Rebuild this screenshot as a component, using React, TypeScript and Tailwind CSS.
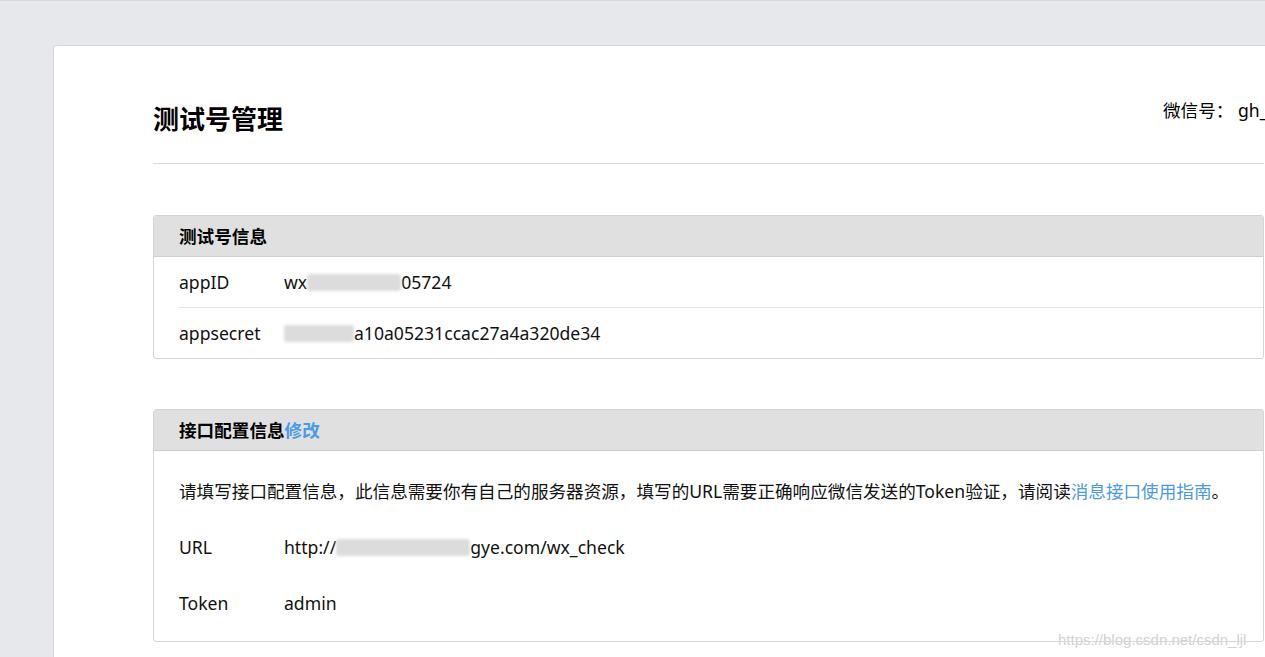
import React from "react";

const font = { fontFamily: '"Noto Sans", "Noto Sans CJK SC", sans-serif' };

function Blob({ w }: { w: number }) {
  return (
    <span
      className="inline-block h-[17px] align-[-2px] rounded-[3px] bg-[#dcdcdc] blur-[1.5px]"
      style={{ width: w }}
    />
  );
}

export default function App() {
  return (
    <div
      className="relative h-[657px] w-full overflow-hidden border-t border-[#d9d9dc] bg-[#e7e8eb] text-[#111]"
      style={font}
    >
      <div className="ml-[53px] mt-[44px] w-[1311px] rounded-[4px] border border-[#d6d6d6] bg-white pl-[99px] pr-[99px] pb-[40px]">
        {/* page header */}
        <div className="flex h-[118px] items-start justify-between border-b border-[#d9d9d9]">
          <h1 className="pt-[58px] text-[26px] font-bold leading-[30px] text-black">测试号管理</h1>
          <div className="w-[101px] whitespace-nowrap pt-[52px] text-[17.6px] leading-[24px] text-black">
            微信号： gh_5f3c8a1e2b47
          </div>
        </div>

        {/* section 1 */}
        <div className="mt-[51px] overflow-hidden rounded-[3px] border border-[#d4d4d4]">
          <div className="flex h-[41px] items-center border-b border-[#cfcfcf] bg-[#e0e0e0] pl-[25px] text-[17.6px] font-bold leading-[24px] text-black">
            测试号信息
          </div>
          <div className="pl-[25px]">
            <div className="flex h-[51px] items-center border-b border-[#e3e3e3] text-[17.6px] leading-[24px]">
              <div className="w-[105px]">appID</div>
              <div className="whitespace-nowrap">
                wx<Blob w={94} />05724
              </div>
            </div>
            <div className="flex h-[50px] items-center text-[17.6px] leading-[24px]">
              <div className="w-[105px]">appsecret</div>
              <div className="whitespace-nowrap">
                <Blob w={70} />a10a05231ccac27a4a320de34
              </div>
            </div>
          </div>
        </div>

        {/* section 2 */}
        <div className="mt-[50px] overflow-hidden rounded-[3px] border border-[#d4d4d4]">
          <div className="flex h-[41px] items-center border-b border-[#cfcfcf] bg-[#e0e0e0] pl-[25px] text-[17.6px] font-bold leading-[24px] text-black">
            接口配置信息<span className="text-[#4a9ae6]">修改</span>
          </div>
          <div className="pl-[25px] pt-[12px] pb-[10px] text-[17.6px] leading-[24px]">
            <div className="flex h-[56px] items-center whitespace-nowrap">
              请填写接口配置信息，此信息需要你有自己的服务器资源，填写的URL需要正确响应微信发送的Token验证，请阅读
              <span className="text-[#4a9ae6]">消息接口使用指南</span>。
            </div>
            <div className="flex h-[56px] items-center">
              <div className="w-[105px]">URL</div>
              <div className="whitespace-nowrap">
                http://<Blob w={134} />gye.com/wx_check
              </div>
            </div>
            <div className="flex h-[56px] items-center">
              <div className="w-[105px]">Token</div>
              <div>admin</div>
            </div>
          </div>
        </div>
      </div>

      <div
        className="absolute left-[1058px] top-[629px] whitespace-nowrap text-[15px] leading-[20px] text-[#d2d2d2]"
        style={{ fontFamily: '"Liberation Sans", Arial, sans-serif', textShadow: "0 0 1px #fff" }}
      >
        https://blog.csdn.net/csdn_ljl
      </div>
    </div>
  );
}
